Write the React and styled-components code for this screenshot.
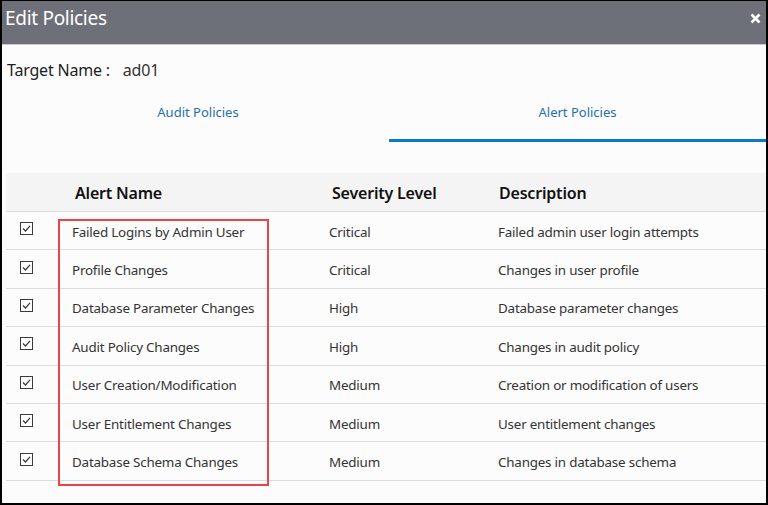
import React from "react"
import styled, { createGlobalStyle } from "styled-components"

const GlobalStyle = createGlobalStyle`
  html, body {
    margin: 0;
    padding: 0;
    background: #fcfcfc;
  }
  * {
    box-sizing: border-box;
  }
`

const alerts = [
  { name: "Failed Logins by Admin User", level: "Critical", desc: "Failed admin user login attempts" },
  { name: "Profile Changes", level: "Critical", desc: "Changes in user profile" },
  { name: "Database Parameter Changes", level: "High", desc: "Database parameter changes" },
  { name: "Audit Policy Changes", level: "High", desc: "Changes in audit policy" },
  { name: "User Creation/Modification", level: "Medium", desc: "Creation or modification of users" },
  { name: "User Entitlement Changes", level: "Medium", desc: "User entitlement changes" },
  { name: "Database Schema Changes", level: "Medium", desc: "Changes in database schema" },
]

function CheckIcon() {
  return (
    <svg width="13" height="13" viewBox="0 0 13 13">
      <rect x="0.5" y="0.5" width="12" height="12" fill="#fff" stroke="#3a3a3a" />
      <path d="M3 6.5 L5.5 9 L10 3.8" fill="none" stroke="#3a3a3a" strokeWidth="1.2" />
    </svg>
  )
}

export default function App() {
  return (
    <>
      <GlobalStyle />
      <Dialog>
        <TitleBar>
          <Title>Edit Policies</Title>
          <CloseButton aria-label="Close">
            <svg width="11" height="11" viewBox="0 0 11 11">
              <path d="M1.5 1.5 L9.5 9.5 M9.5 1.5 L1.5 9.5" stroke="#fff" strokeWidth="2.6" />
            </svg>
          </CloseButton>
        </TitleBar>
        <Body>
          <TargetRow>
            <span>Target Name :</span>
            <TargetValue>ad01</TargetValue>
          </TargetRow>
          <Tabs>
            <Tab>Audit Policies</Tab>
            <Tab $active>Alert Policies</Tab>
          </Tabs>
          <Table>
            <HeaderRow>
              <span />
              <HeadCell>Alert Name</HeadCell>
              <HeadCell>Severity Level</HeadCell>
              <HeadCell $pad={7}>Description</HeadCell>
            </HeaderRow>
            {alerts.map((a) => (
              <Row key={a.name}>
                <CheckCell>
                  <CheckIcon />
                </CheckCell>
                <Cell>{a.name}</Cell>
                <Cell>{a.level}</Cell>
                <Cell>{a.desc}</Cell>
              </Row>
            ))}
            <Highlight />
          </Table>
        </Body>
      </Dialog>
    </>
  )
}

const Dialog = styled.div`
  width: 768px;
  height: 505px;
  border: 2px solid #000;
  border-top-width: 1px;
  background: #fcfcfc;
  display: flex;
  flex-direction: column;
  font-family: "Noto Sans", "Open Sans", sans-serif;
  overflow: hidden;
`

const TitleBar = styled.div`
  height: 44px;
  flex: none;
  background: #6e7079;
  border-bottom: 1px solid #c9c9c9;
  display: flex;
  align-items: flex-start;
  justify-content: space-between;
  padding: 5px 5px 0 3px;
`

const Title = styled.div`
  color: #fff;
  font-size: 19px;
  line-height: 24px;
  letter-spacing: -0.3px;
`

const CloseButton = styled.div`
  display: flex;
  padding-top: 7px;
`

const Body = styled.div`
  flex: 1;
  display: flex;
  flex-direction: column;
  padding: 0 0 0 4px;
`

const TargetRow = styled.div`
  height: 52px;
  display: flex;
  align-items: center;
  gap: 13px;
  padding: 0 0 3px 1px;
  font-size: 16px;
  color: #1e1e1e;
  letter-spacing: -0.2px;
`

const TargetValue = styled.span`
  color: #333;
`

const Tabs = styled.div`
  display: grid;
  grid-template-columns: 382px 377px;
  margin-left: 1px;
  height: 45px;
`

const Tab = styled.div`
  display: flex;
  align-items: center;
  justify-content: center;
  padding-bottom: 12px;
  font-size: 13px;
  color: #1f6fae;
  border-bottom: 3px solid ${(p) => (p.$active ? "#0a7bc6" : "transparent")};
`

const Table = styled.div`
  position: relative;
  margin-top: 31px;
  width: 760px;
`

const columns = "60px 257px 169px 1fr"

const HeaderRow = styled.div`
  display: grid;
  grid-template-columns: ${columns};
  height: 39px;
  align-items: center;
  background: #f4f4f4;
  border-bottom: 1px solid #dcdcdc;
  padding-top: 1px;
`

const HeadCell = styled.div`
  padding-left: ${(p) => p.$pad ?? 9}px;
  font-size: 16px;
  font-weight: 600;
  color: #111;
  letter-spacing: -0.2px;
`

const Row = styled.div`
  display: grid;
  grid-template-columns: ${columns};
  height: 38.4px;
  align-items: center;
  border-bottom: 1px solid #dcdcdc;
`

const CheckCell = styled.div`
  display: flex;
  padding: 0 0 4px 14px;
`

const Cell = styled.div`
  padding: 2px 0 0 6px;
  font-size: 13.4px;
  color: #333;
  letter-spacing: -0.2px;
`

const Highlight = styled.div`
  position: absolute;
  left: 52px;
  top: 46px;
  width: 211px;
  height: 267px;
  border: 2px solid #ef4148;
  pointer-events: none;
`
